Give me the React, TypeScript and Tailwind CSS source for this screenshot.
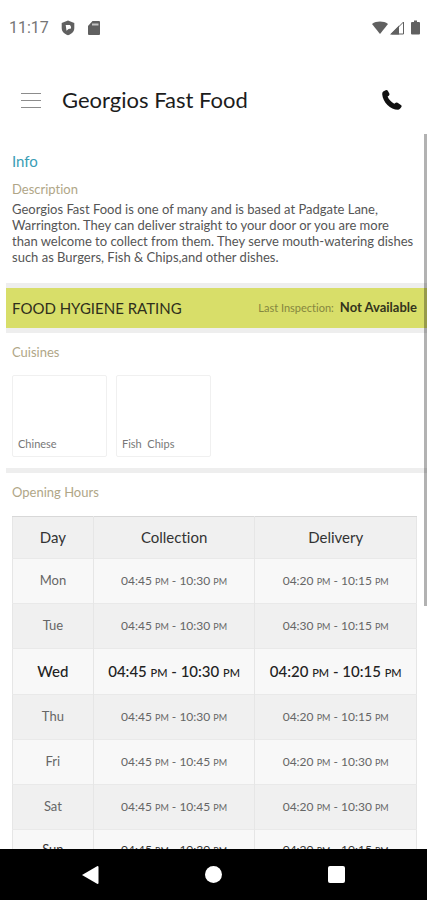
import React from "react";

type Period = { from: string; to: string };
type DayHours = { day: string; collection: Period; delivery: Period; today?: boolean };

const hours: DayHours[] = [
  { day: "Mon", collection: { from: "04:45", to: "10:30" }, delivery: { from: "04:20", to: "10:15" } },
  { day: "Tue", collection: { from: "04:45", to: "10:30" }, delivery: { from: "04:30", to: "10:15" } },
  { day: "Wed", collection: { from: "04:45", to: "10:30" }, delivery: { from: "04:20", to: "10:15" }, today: true },
  { day: "Thu", collection: { from: "04:45", to: "10:30" }, delivery: { from: "04:20", to: "10:15" } },
  { day: "Fri", collection: { from: "04:45", to: "10:45" }, delivery: { from: "04:20", to: "10:30" } },
  { day: "Sat", collection: { from: "04:45", to: "10:45" }, delivery: { from: "04:20", to: "10:30" } },
  { day: "Sun", collection: { from: "04:45", to: "10:30" }, delivery: { from: "04:20", to: "10:15" } },
];

const cuisines = ["Chinese", "Fish  Chips"];

function StatusBar() {
  return (
    <div className="flex h-14 shrink-0 items-center justify-between pr-[7px] pl-[9px] text-[#606060]">
      <div className="flex items-center gap-3">
        <span className="w-[39px] font-['Roboto',sans-serif] text-base text-[#757575]">11:17</span>
        <svg className="h-4 w-4" viewBox="0 0 16 16" aria-hidden="true">
          <path fill="currentColor" d="M8 .5 14.300 3V8c0 3.500-2.500 6-6.300 7.200C4.200 14 1.700 11.500 1.700 8V3z" />
          <path fill="#fff" d="M5.700 5h4.300q1.500 1.500 1 3.500L8.500 9 6.500 10.800z" />
        </svg>
        <svg className="h-4 w-3" viewBox="0 0 12 16" aria-hidden="true">
          <path fill="currentColor" d="M4.500 1H11q1 0 1 1v12q0 1-1 1H1q-1 0-1-1V6z" />
          <path stroke="#c4c4c4" strokeWidth="2" d="M4 4.500h6.500" />
        </svg>
      </div>
      <div className="flex items-center">
        <svg className="h-4 w-4" viewBox="0 0 16 16" aria-hidden="true">
          <path fill="currentColor" d="M0 4C4.500 .8 11.500 .8 16 4L8 14z" />
        </svg>
        <svg className="ml-0.5 h-4 w-[14px]" viewBox="0 0 14 16" aria-hidden="true">
          <path fill="currentColor" d="M0 14.500 9 5.500v9z" />
          <path fill="none" stroke="currentColor" d="M1.500 14 13.500 2v12z" />
        </svg>
        <svg className="ml-[7px] h-4 w-[9px]" viewBox="0 0 9 16" aria-hidden="true">
          <path fill="currentColor" d="M3 .5h3V2h2q1 0 1 1v10.500q0 1-1 1H1q-1 0-1-1V3q0-1 1-1h2z" />
        </svg>
      </div>
    </div>
  );
}

function Header() {
  return (
    <header className="flex h-[78px] shrink-0 items-center px-[21px] pt-2.5">
      <button type="button" aria-label="Menu" className="flex w-5 flex-col gap-1.5">
        <span className="h-px w-full bg-[#8c8c8c]" />
        <span className="h-px w-full bg-[#8c8c8c]" />
        <span className="h-px w-full bg-[#8c8c8c]" />
      </button>
      <h1 className="ml-[21px] flex-1 text-[22px] leading-7 text-[#1c1c1c]">Georgios Fast Food</h1>
      <button type="button" aria-label="Call" className="mr-1 text-[#111]">
        <svg className="h-5 w-5" viewBox="0 0 20 20" aria-hidden="true">
          <path
            fill="currentColor"
            d="M1.200 1.600 3.600.3q1.300-.6 2.200.5l1.500 2.700q.5 1.300-.5 2.200L5.600 6.600c1.200 3 3.500 5.400 6.700 7.100l1.400-.9q1-.6 1.900 0l3.300 2.100q1.100.8.500 2l-1.200 1.700q-.7 1-2 1.100C8.200 19.600.9 12.300.2 4.200Q.1 2.500 1.200 1.600z"
          />
        </svg>
      </button>
    </header>
  );
}

function SectionTitle({ children }: { children: React.ReactNode }) {
  return <h3 className="text-[13px] leading-4 text-[#b0a687]">{children}</h3>;
}

function Time({ period, today }: { period: Period; today?: boolean }) {
  const suffix = today ? "text-[11px]" : "text-[9px]";
  return (
    <>
      {period.from} <span className={suffix}>PM</span> - {period.to} <span className={suffix}>PM</span>
    </>
  );
}

function HoursTable() {
  return (
    <table className="mt-4 w-full table-fixed border-collapse border border-[#e6e6e6] text-center">
      <colgroup>
        <col className="w-[20%]" />
        <col className="w-[40%]" />
        <col className="w-[40%]" />
      </colgroup>
      <thead>
        <tr className="h-[42px] border-t border-t-[#d8d8d8] bg-[#f0f0f0] text-[15px] text-[#333]">
          <th className="border-r border-[#e6e6e6] font-normal">Day</th>
          <th className="border-r border-[#e6e6e6] font-normal">Collection</th>
          <th className="font-normal">Delivery</th>
        </tr>
      </thead>
      <tbody>
        {hours.map((row) => (
          <tr
            key={row.day}
            className={
              row.today
                ? "h-[46px] border-t border-[#e9e9e9] text-[15px] font-medium text-[#222] odd:bg-[#f8f8f8] even:bg-[#f0f0f0]"
                : "h-[45px] border-t border-[#e9e9e9] text-[12px] text-[#666] odd:bg-[#f8f8f8] even:bg-[#f0f0f0] last:h-10 last:text-[#333]"
            }
          >
            <td className={row.today ? "border-r border-[#e6e6e6]" : "border-r border-[#e6e6e6] text-[13px]"}>
              {row.day}
            </td>
            <td className="border-r border-[#e6e6e6]">
              <Time period={row.collection} today={row.today} />
            </td>
            <td>
              <Time period={row.delivery} today={row.today} />
            </td>
          </tr>
        ))}
      </tbody>
    </table>
  );
}

function NavigationBar() {
  return (
    <nav className="flex h-[51px] shrink-0 items-center justify-center gap-[106px] bg-black text-white">
      <button type="button" aria-label="Back">
        <svg className="h-[18px] w-[17px]" viewBox="0 0 17 18" aria-hidden="true">
          <path fill="currentColor" d="M0 9 15.500 0q1 0 1 1v16q0 1-1 1z" />
        </svg>
      </button>
      <button type="button" aria-label="Home" className="h-[17px] w-[17px] rounded-full bg-white" />
      <button type="button" aria-label="Recent apps" className="h-[17px] w-[17px] rounded-xs bg-white" />
    </nav>
  );
}

export default function App() {
  return (
    <div className="flex h-screen flex-col overflow-hidden bg-white font-['Lato','Liberation_Sans',sans-serif] [font-variant-ligatures:none]">
      <StatusBar />
      <Header />
      <main className="relative min-h-0 flex-1 overflow-hidden pl-1.5">
        <section className="pt-[18px] pr-3 pb-[18px] pl-1.5">
          <h2 className="text-[15px] leading-[18px] text-[#3a9db5]">Info</h2>
          <div className="mt-[11px]">
            <SectionTitle>Description</SectionTitle>
          </div>
          <p className="mt-1 text-[13px] leading-4 text-[#555]">
            Georgios Fast Food is one of many and is based at Padgate Lane, Warrington. They can deliver straight to
            your door or you are more than welcome to collect from them. They serve mouth-watering dishes such as
            Burgers, Fish &amp; Chips,and other dishes.
          </p>
        </section>
        <section className="flex items-center justify-between border-y-[5px] border-[#eeeeee] bg-[#d8de69] pr-2.5 pl-1.5">
          <h2 className="text-[15px] leading-10 text-[#2f2f1c]">FOOD HYGIENE RATING</h2>
          <p className="flex items-center gap-1.5">
            <span className="text-[11px] text-[#85863f]">Last Inspection:</span>
            <span className="text-[13px] font-bold text-[#33341c]">Not Available</span>
          </p>
        </section>
        <section className="border-b-[5px] border-[#eeeeee] px-1.5 pt-[11px] pb-[11px]">
          <SectionTitle>Cuisines</SectionTitle>
          <ul className="mt-[15px] flex gap-[9px]">
            {cuisines.map((name) => (
              <li
                key={name}
                className="flex h-[82px] w-[95px] items-end rounded-xs border border-[#f0f0f0] px-[5px] pb-1 text-[11px] leading-4 whitespace-pre text-[#777]"
              >
                {name}
              </li>
            ))}
          </ul>
        </section>
        <section className="pt-[11px] pr-2.5 pl-1.5">
          <SectionTitle>Opening Hours</SectionTitle>
          <HoursTable />
        </section>
        <div className="absolute top-0 right-0 h-[66%] w-[3px] bg-black/30" />
      </main>
      <NavigationBar />
    </div>
  );
}
